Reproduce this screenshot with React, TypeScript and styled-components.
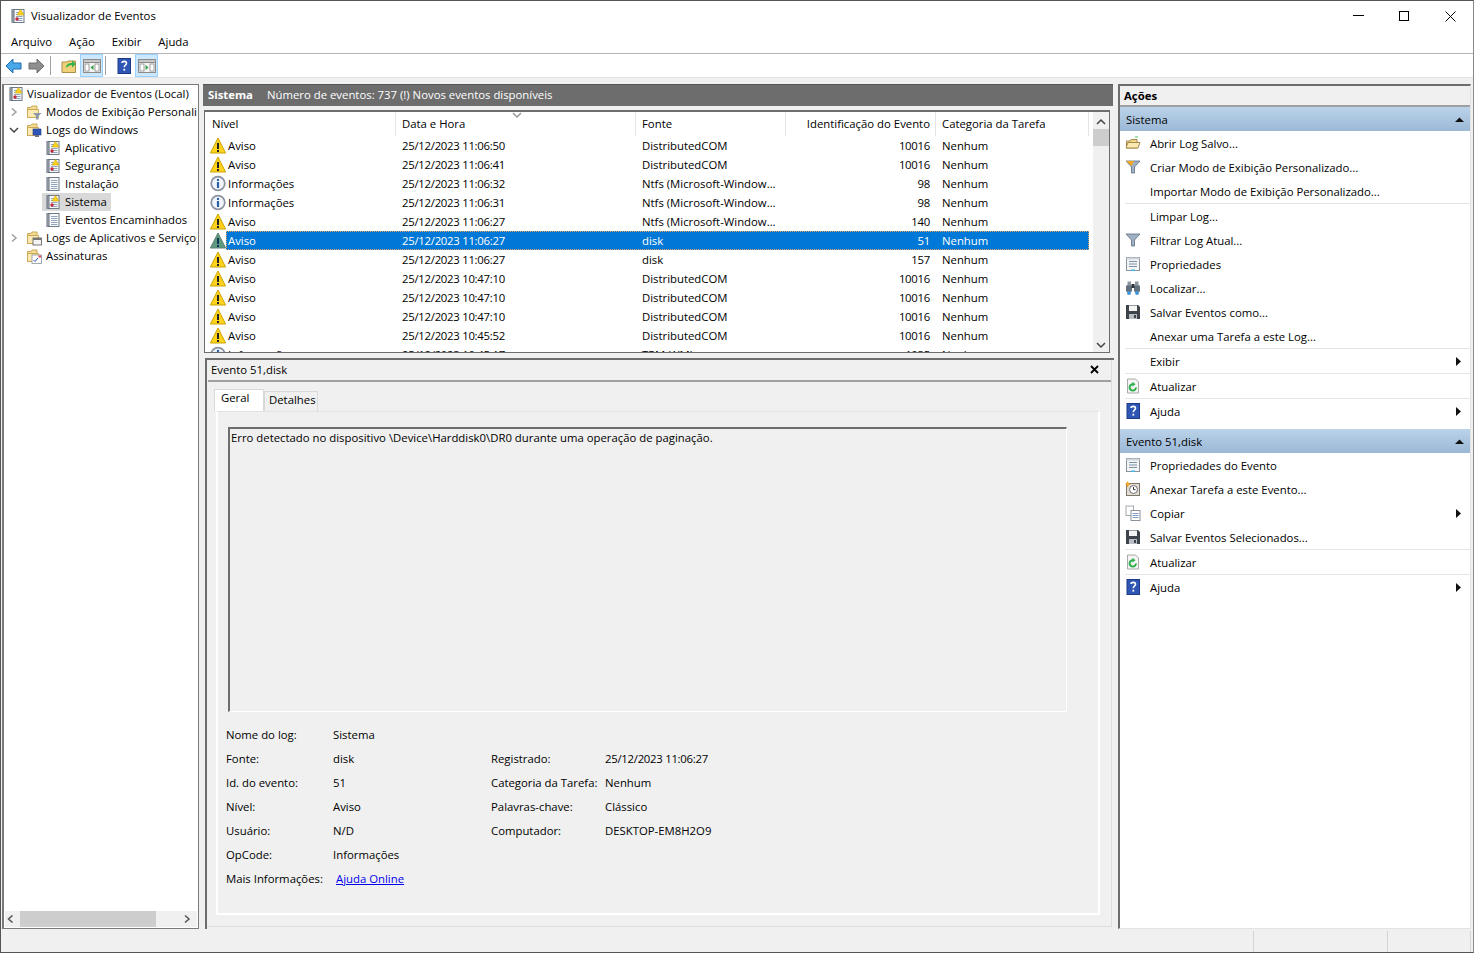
import React from "react";
import styled, { createGlobalStyle } from "styled-components";

const GlobalStyle = createGlobalStyle`
	html, body {
		margin: 0;
		padding: 0;
		height: 100%;
		overflow: hidden;
		background: #f0f0f0;
	}
	body {
		font-family: "Open Sans", "Noto Sans", "Liberation Sans", sans-serif;
		font-size: 11.35px;
		color: #000;
	}
	svg {
		display: block;
		flex: none;
	}
`;

/* window chrome */

const Window = styled.div`
	box-sizing: border-box;
	width: 1474px;
	height: 953px;
	display: flex;
	flex-direction: column;
	border: 1px solid #555;
	border-right-color: #8a8a8a;
	background: #f0f0f0;
	overflow: hidden;
`;

const TitleBar = styled.div`
	height: 30px;
	flex: none;
	display: flex;
	align-items: center;
	background: #fff;
	padding-left: 9px;
`;

const Title = styled.div`
	margin-left: 5px;
	padding-bottom: 2px;
	flex: 1;
`;

const WindowButton = styled.div`
	width: 46px;
	height: 30px;
	display: flex;
	align-items: center;
	justify-content: center;
`;

const MenuBar = styled.div`
	box-sizing: border-box;
	height: 23px;
	flex: none;
	display: flex;
	align-items: center;
	gap: 17px;
	padding: 0 0 2px 10px;
	background: #fff;
	border-bottom: 1px solid #b4b4bd;
`;

const Toolbar = styled.div`
	height: 23px;
	flex: none;
	display: flex;
	align-items: center;
	padding-left: 1px;
	background: #fff;
	border-bottom: 1px solid #e3e3e3;
`;

const ToolButton = styled.div<{ $active?: boolean }>`
	box-sizing: border-box;
	width: 23px;
	height: 23px;
	display: flex;
	align-items: center;
	justify-content: center;
	background: ${(p) => (p.$active ? "#cce8ff" : "transparent")};
	border: 1px solid ${(p) => (p.$active ? "#99d1ff" : "transparent")};
`;

const ToolSep = styled.div`
	width: 1px;
	height: 19px;
	margin: 0 6px 0 2px;
	background: #a0a0a0;
`;

const Main = styled.div`
	flex: 1;
	min-height: 0;
	display: flex;
	gap: 4px;
	padding: 6px 2px 0 1px;
`;

const StatusBar = styled.div`
	height: 23px;
	flex: none;
	display: flex;
	justify-content: flex-end;
	padding: 2px 2px 0 0;
	box-sizing: border-box;
`;

const StatusCell = styled.div<{ $w: number; $last?: boolean }>`
	width: ${(p) => p.$w}px;
	border-left: 1px solid #d4d4d4;
	border-right: ${(p) => (p.$last ? "1px solid #d4d4d4" : "none")};
	box-sizing: border-box;
`;

/* left tree */

const TreePane = styled.div`
	box-sizing: border-box;
	width: 197px;
	flex: none;
	display: flex;
	flex-direction: column;
	background: #fff;
	border: 1px solid #7a7a7a;
	border-left-width: 2px;
`;

const TreeBody = styled.div`
	flex: 1;
	overflow: hidden;
	margin-right: 1px;
`;

const TreeRow = styled.div<{ $level: number }>`
	height: 18px;
	display: flex;
	align-items: center;
	white-space: nowrap;
	padding-left: ${(p) => [4, 3, 38][p.$level]}px;
`;

const Twisty = styled.div`
	width: 14px;
	height: 18px;
	flex: none;
	margin-right: 5px;
	display: flex;
	align-items: center;
	justify-content: center;
`;

const TreeItem = styled.div<{ $selected?: boolean; $level: number }>`
	height: 18px;
	flex: none;
	display: flex;
	align-items: center;
	gap: ${(p) => (p.$level === 0 ? 3 : 4)}px;
	padding: ${(p) => (p.$level === 2 ? "0 4px 0 3px" : "0")};
	background: ${(p) => (p.$selected ? "#d9d9d9" : "transparent")};
`;

const TreeLabel = styled.span`
	padding-bottom: 2px;
`;

const HScroll = styled.div`
	height: 16px;
	flex: none;
	display: flex;
	align-items: center;
	justify-content: space-between;
	background: #f0f0f0;
	margin: 0 1px 1px 1px;
	padding: 0 5px 0 1px;
	box-sizing: border-box;
	position: relative;
`;

const HThumb = styled.div`
	position: absolute;
	left: 15px;
	top: 0;
	width: 136px;
	height: 16px;
	background: #cdcdcd;
`;

/* centre column */

const Centre = styled.div`
	flex: 1;
	min-width: 0;
	display: flex;
	flex-direction: column;
`;

const LogHeader = styled.div`
	height: 22px;
	flex: none;
	display: flex;
	align-items: center;
	gap: 14px;
	margin-right: 1px;
	padding: 0 0 2px 5px;
	background: #6d6d6d;
	border-top: 1px solid #555;
	box-sizing: border-box;
	color: #fff;
`;

const LogName = styled.b`
	font-weight: 700;
`;

const ListFrame = styled.div`
	height: 243px;
	flex: none;
	margin: 4px 4px 5px 1px;
	box-sizing: border-box;
	display: flex;
	background: #fff;
	border: 1px solid #6d6d6d;
	border-width: 2px 1px 1px 1px;
`;

const ListArea = styled.div`
	flex: 1;
	min-width: 0;
	overflow: hidden;
	padding-right: 4px;
`;

const ListHead = styled.div`
	height: 24px;
	display: grid;
	grid-template-columns: 191px 240px 150px 150px 1fr;
`;

const HeadCell = styled.div<{ $right?: boolean }>`
	position: relative;
	display: flex;
	align-items: center;
	justify-content: ${(p) => (p.$right ? "flex-end" : "flex-start")};
	padding: 0 5px 2px 6px;
	border-right: 1px solid #e5e5e5;
	&:first-child {
		padding-left: 7px;
	}
`;

const SortMark = styled.div`
	position: absolute;
	left: 116px;
	top: -1px;
`;

const ListRow = styled.div`
	height: 19px;
	display: flex;
	align-items: center;
	padding-left: 4px;
`;

const RowCells = styled.div<{ $selected?: boolean }>`
	flex: 1;
	box-sizing: border-box;
	height: 19px;
	display: grid;
	grid-template-columns: 170px 240px 150px 150px 1fr;
	align-items: center;
	background: ${(p) => (p.$selected ? "#0078d7" : "transparent")};
	color: ${(p) => (p.$selected ? "#fff" : "#000")};
	outline: ${(p) => (p.$selected ? "1px dotted #e8a35c" : "none")};
	outline-offset: -1px;
`;

const Cell = styled.div<{ $right?: boolean; $digits?: boolean }>`
	padding: 0 6px 1px;
	white-space: nowrap;
	overflow: hidden;
	text-align: ${(p) => (p.$right ? "right" : "left")};
	letter-spacing: ${(p) => (p.$digits ? "-0.27px" : "normal")};
`;

const LevelCell = styled(Cell)`
	padding: 0 2px 1px;
`;

const VScroll = styled.div`
	width: 16px;
	flex: none;
	background: #f0f0f0;
	display: flex;
	flex-direction: column;
	align-items: center;
	justify-content: space-between;
	position: relative;
	padding: 6px 0 3px;
	box-sizing: border-box;
`;

const VThumb = styled.div`
	position: absolute;
	top: 17px;
	left: 0;
	width: 16px;
	height: 17px;
	background: #cdcdcd;
`;

const DetailFrame = styled.div`
	flex: 1;
	min-height: 0;
	margin-left: 2px;
	display: flex;
	flex-direction: column;
	border-top: 2px solid #6d6d6d;
	border-left: 2px solid #6d6d6d;
	padding-right: 2px;
`;

const DetailInner = styled.div`
	flex: 1;
	min-height: 0;
	display: flex;
	flex-direction: column;
	border-right: 1px solid #dedede;
	border-bottom: 1px solid #dedede;
	margin-bottom: 2px;
`;

const DetailHead = styled.div`
	height: 18px;
	flex: none;
	display: flex;
	align-items: center;
	justify-content: space-between;
	margin-left: 1px;
	padding: 0 12px 2px 3px;
	border-bottom: 2px solid #a0a0a0;
`;

const Tabs = styled.div`
	display: flex;
	align-items: flex-end;
	height: 22px;
	flex: none;
	margin: 7px 0 0 7px;
`;

const Tab = styled.div<{ $active?: boolean }>`
	box-sizing: border-box;
	width: ${(p) => (p.$active ? 50 : 54)}px;
	height: ${(p) => (p.$active ? 22 : 20)}px;
	padding: ${(p) => (p.$active ? "0 0 6px 6px" : "0 0 4px 4px")};
	display: flex;
	align-items: center;
	background: ${(p) => (p.$active ? "#fff" : "#f0f0f0")};
	border: 1px solid #d9d9d9;
	border-bottom: none;
`;

const TabPanel = styled.div`
	flex: none;
	height: 504px;
	width: 884px;
	margin-left: 9px;
	box-sizing: border-box;
	padding: 15px 0 0 8px;
	border: 2px solid #fff;
	border-top: 1px solid #e3e3e3;
`;

const MessageBox = styled.div`
	box-sizing: border-box;
	width: 839px;
	height: 285px;
	margin-left: 2px;
	padding: 1px;
	border: 1px solid #fff;
	border-top: 2px solid #6d6d6d;
	border-left: 2px solid #6d6d6d;
`;

const Fields = styled.div`
	display: flex;
	margin-top: 10px;
`;

const FieldColumn = styled.div<{ $w: number; $labelW: number; $offset?: boolean }>`
	width: ${(p) => p.$w}px;
	display: grid;
	grid-template-columns: ${(p) => p.$labelW}px 1fr;
	grid-auto-rows: 24px;
	align-items: center;
	padding-top: ${(p) => (p.$offset ? 24 : 0)}px;
`;

const DateValue = styled.span`
	letter-spacing: -0.27px;
`;

const Link = styled.a`
	margin-left: 3px;
	color: #0000ee;
	text-decoration: underline;
`;

/* right column */

const ActionsPane = styled.div`
	box-sizing: border-box;
	flex: none;
	width: 353px;
	display: flex;
	flex-direction: column;
	background: #fff;
	border-top: 2px solid #6d6d6d;
	border-left: 2px solid #6d6d6d;
	border-right: 1px solid #e3e3e3;
	border-bottom: 1px solid #e3e3e3;
`;

const ActionsHead = styled.div`
	height: 18px;
	flex: none;
	display: flex;
	align-items: center;
	padding: 0 0 1px 4px;
	background: #f0f0f0;
	border-bottom: 2px solid #a0a0a0;
	font-weight: 700;
`;

const Band = styled.div<{ $gap?: boolean }>`
	box-sizing: border-box;
	height: 24px;
	flex: none;
	display: flex;
	align-items: center;
	justify-content: space-between;
	padding: 0 6px;
	margin-top: ${(p) => (p.$gap ? 6 : 0)}px;
	background: linear-gradient(#bbd3ea, #9bb8d6);
`;

const ActionRow = styled.div<{ $sep?: boolean }>`
	height: 24px;
	flex: none;
	display: flex;
	align-items: center;
	margin-left: 5px;
	padding: 0 7px 0 0;
	border-bottom: ${(p) => (p.$sep ? "1px solid #e5e5e5" : "none")};
`;

const ActionIcon = styled.div`
	width: 16px;
	height: 16px;
	margin-right: 9px;
	flex: none;
`;

const ActionLabel = styled.div`
	flex: 1;
`;

/* icons */

const Warn = ({ dim }: { dim?: boolean }) => (
	<svg width="17" height="17" viewBox="0 0 17 17">
		<path d="M9 1 L16.6 16 L1.4 16 Z" fill={dim ? "#5f9a7e" : "#ffd21e"} stroke={dim ? "#5a7f70" : "#c9a400"} strokeLinejoin="round" />
		<rect x="8" y="6" width="2" height="6" fill={dim ? "#0c3358" : "#222"} />
		<rect x="8" y="13" width="2" height="2" fill={dim ? "#0c3358" : "#222"} />
	</svg>
);

const Info = () => (
	<svg width="17" height="17" viewBox="0 0 17 17">
		<circle cx="9" cy="8.5" r="6.8" fill="#f1f5fb" stroke="#8b93a3" strokeWidth="1.8" />
		<circle cx="9" cy="4.9" r="1.2" fill="#2a5fa8" />
		<rect x="7.9" y="7" width="2.2" height="6" fill="#2a5fa8" />
	</svg>
);

const Folder = ({ children }: { children?: React.ReactNode }) => (
	<svg width="16" height="16" viewBox="0 0 16 16">
		<path d="M1.5 3.5 H5 L6 2 H11 V13.5 H1.5 Z" fill="#f6dc92" stroke="#c9a957" />
		<path d="M1.5 13.5 V5.5 H12.5 V13.5 Z" fill="#fbeab4" stroke="#c9a957" />
		{children}
	</svg>
);

const LogBook = ({ plain }: { plain?: boolean }) => (
	<svg width="16" height="16" viewBox="0 0 16 16">
		<rect x="3" y="1.5" width="11" height="13" fill="#f7f9fb" stroke="#6f7a87" />
		{[2, 4, 6, 8, 10, 12, 14].map((y) => (
			<rect key={y} x="1" y={y - 0.5} width="4" height="1" fill="#5f6a78" />
		))}
		{[4, 6, 8, 10, 12].map((y) => (
			<rect key={y} x="6" y={y} width="6.5" height="1" fill="#93a5ba" />
		))}
		{!plain && <path d="M10.5 1.5 L14 7 H7 Z" fill="#ffd21e" stroke="#c9a400" strokeWidth="0.6" />}
		{!plain && <circle cx="7" cy="11" r="1.7" fill="#c4293c" />}
	</svg>
);

const Help = ({ size = 16 }: { size?: number }) => (
	<svg width={size} height={size} viewBox="0 0 16 16">
		<rect x="2" y="0.5" width="12.5" height="15" fill="#2f56b4" stroke="#1c3a86" />
		<path d="M6 5 C6 2.8 10.5 2.8 10.5 5.2 C10.5 7 8.3 7 8.3 9.2" fill="none" stroke="#fff" strokeWidth="1.6" />
		<rect x="7.4" y="10.8" width="1.8" height="1.8" fill="#fff" />
	</svg>
);

const PanelToggle = ({ right }: { right?: boolean }) => (
	<svg width="20" height="16" viewBox="0 0 20 16">
		<rect x="1.5" y="1.5" width="17" height="13" fill="#f4f4f4" stroke="#8b8b8b" />
		<rect x="1.5" y="1.5" width="17" height="3" fill="#c9c9c9" stroke="#8b8b8b" />
		<rect x="3" y="6" width="4" height="7" fill="#fff" stroke="#8a8a8a" strokeWidth="0.8" />
		<rect x="13" y="6" width="4" height="7" fill="#fff" stroke="#8a8a8a" strokeWidth="0.8" />
		<path d={right ? "M8.5 7 L11.5 9.5 L8.5 12 Z" : "M11.5 7 L8.5 9.5 L11.5 12 Z"} fill="#2f9e44" />
	</svg>
);

const NavArrow = ({ forward }: { forward?: boolean }) => (
	<svg width="17" height="16" viewBox="0 0 17 16">
		<path
			d={forward ? "M16 8 L9 1 V5 H1 V11 H9 V15 Z" : "M1 8 L8 1 V5 H16 V11 H8 V15 Z"}
			fill={forward ? "#8f8f8f" : "#49a8ea"}
			stroke={forward ? "#6e6e6e" : "#1f6fb5"}
			strokeLinejoin="round"
		/>
	</svg>
);

const Chevron = ({ dir, color = "#444" }: { dir: "up" | "down" | "left" | "right"; color?: string }) => {
	const d = {
		up: "M1 6 L5 2 L9 6",
		down: "M1 2 L5 6 L9 2",
		left: "M6.5 0.5 L2.5 4 L6.5 7.5",
		right: "M3 0.5 L7 4 L3 7.5",
	}[dir];
	return (
		<svg width="10" height="8" viewBox="0 0 10 8">
			<path d={d} fill="none" stroke={color} strokeWidth="1.5" />
		</svg>
	);
};

const SmallTriangle = ({ up }: { up?: boolean }) => (
	<svg width="9" height="9" viewBox="0 0 9 9">
		<path d={up ? "M0 7 L4.5 2.5 L9 7 Z" : "M2 0 L7 4.5 L2 9 Z"} fill="#111" />
	</svg>
);

const OpenFolder = () => (
	<svg width="16" height="16" viewBox="0 0 16 16">
		<path d="M1.5 6 H5 L6 4.5 H12 V13 H1.5 Z" fill="#f0d48a" stroke="#a48a4f" />
		<path d="M1 13 L3 7.5 H15 L13 13 Z" fill="#fbe9b2" stroke="#a48a4f" />
		<rect x="10" y="1.5" width="3" height="1" fill="#3ecf5a" />
	</svg>
);

const Funnel = ({ accent }: { accent?: boolean }) => (
	<svg width="16" height="16" viewBox="0 0 16 16">
		<path d="M1 2 H15 L9.5 8 V14 H6.5 V8 Z" fill="#9fb1c3" stroke="#5c6d80" strokeWidth="0.8" />
		{accent && <path d="M1 2 H9 L6.5 7 Z" fill="#f5a623" />}
	</svg>
);

const PropsIcon = () => (
	<svg width="16" height="16" viewBox="0 0 16 16">
		<rect x="1.5" y="1.5" width="13" height="13" fill="#f3f5f7" stroke="#8a929b" />
		<rect x="1.5" y="1.5" width="13" height="2" fill="#cfd6dd" />
		{[5, 7.5, 10].map((y) => (
			<rect key={y} x="4" y={y} width="8" height="1" fill="#7d92a8" />
		))}
		<rect x="6" y="13.5" width="4" height="1.5" fill="#45b3e0" />
	</svg>
);

const Binoculars = () => (
	<svg width="16" height="16" viewBox="0 0 16 16">
		<rect x="1" y="5" width="6" height="7" rx="1.5" fill="#66707c" />
		<rect x="9" y="5" width="6" height="7" rx="1.5" fill="#66707c" />
		<rect x="2.5" y="1.5" width="3.5" height="4" fill="#8b95a0" />
		<rect x="10" y="1.5" width="3.5" height="4" fill="#8b95a0" />
		<rect x="6.5" y="4" width="3" height="4" fill="#2d343c" />
		<circle cx="4" cy="13" r="2" fill="#3f96dc" />
		<circle cx="12" cy="13" r="2" fill="#3f96dc" />
	</svg>
);

const Disk = () => (
	<svg width="16" height="16" viewBox="0 0 16 16">
		<path d="M1 1 H13 L15 3 V15 H1 Z" fill="#3d434a" />
		<rect x="4" y="1.5" width="8" height="5.5" fill="#f4f4f4" />
		<rect x="4" y="10" width="8" height="5" fill="#b9bec4" />
		<rect x="9" y="11" width="2" height="3" fill="#3d434a" />
	</svg>
);

const Refresh = () => (
	<svg width="16" height="16" viewBox="0 0 16 16">
		<path d="M2.5 1 H10.5 L13.5 4 V15 H2.5 Z" fill="#f5f5f5" stroke="#a9a9a9" />
		<path d="M11 9.5 A3.2 3.2 0 1 1 8 6.2" fill="none" stroke="#2fae4a" strokeWidth="2" />
		<path d="M7.5 3.8 L10.5 6.2 L7.5 8.4 Z" fill="#2fae4a" />
	</svg>
);

const TaskIcon = () => (
	<svg width="16" height="16" viewBox="0 0 16 16">
		<rect x="1.5" y="2.5" width="13" height="12" fill="#e4dfd6" stroke="#7d756a" />
		<circle cx="8.5" cy="8.5" r="4" fill="#fff" stroke="#6b6b6b" />
		<path d="M8.5 6 V8.7 H10.5" fill="none" stroke="#333" />
		<path d="M2.5 0 L4 2.5 L6.5 3 L4 4 L2.5 6.5 L1.5 4 L0 3 L1.5 2.5 Z" fill="#f5a623" />
	</svg>
);

const CopyIcon = () => (
	<svg width="16" height="16" viewBox="0 0 16 16">
		<rect x="1" y="1" width="7.5" height="9.5" fill="#fff" stroke="#a3a9b0" />
		<rect x="6" y="5.5" width="9" height="10" fill="#fff" stroke="#8a929b" />
		{[8, 10, 12].map((y) => (
			<rect key={y} x="7.5" y={y} width="6" height="1" fill="#7d9cc0" />
		))}
	</svg>
);

const treeRows: { label: string; level: number; twisty?: "right" | "down"; icon: React.ReactNode; selected?: boolean }[] = [
	{ label: "Visualizador de Eventos (Local)", level: 0, icon: <LogBook /> },
	{
		label: "Modos de Exibição Personalizados",
		level: 1,
		twisty: "right",
		icon: (
			<Folder>
				<path d="M7 9 H15.5 L12.5 12 V15.5 H10 V12 Z" fill="#8a98a8" />
			</Folder>
		),
	},
	{
		label: "Logs do Windows",
		level: 1,
		twisty: "down",
		icon: (
			<Folder>
				<rect x="7" y="7" width="8" height="6" fill="#2f56b4" stroke="#1c3a86" strokeWidth="0.6" />
				<rect x="9" y="13" width="4" height="2" fill="#6b7480" />
			</Folder>
		),
	},
	{ label: "Aplicativo", level: 2, icon: <LogBook /> },
	{ label: "Segurança", level: 2, icon: <LogBook /> },
	{ label: "Instalação", level: 2, icon: <LogBook plain /> },
	{ label: "Sistema", level: 2, icon: <LogBook />, selected: true },
	{ label: "Eventos Encaminhados", level: 2, icon: <LogBook plain /> },
	{
		label: "Logs de Aplicativos e Serviços",
		level: 1,
		twisty: "right",
		icon: (
			<Folder>
				<rect x="7" y="8" width="8.5" height="7" fill="#f4f4f4" stroke="#555" strokeWidth="0.8" />
				<rect x="7" y="8" width="8.5" height="2" fill="#777" />
			</Folder>
		),
	},
	{
		label: "Assinaturas",
		level: 1,
		icon: (
			<Folder>
				<rect x="6" y="7" width="9.5" height="8.5" fill="#fff" stroke="#8a929b" strokeWidth="0.8" />
				<path d="M7.5 12 L9 13.5 L12 10" fill="none" stroke="#2f56b4" />
				<rect x="12.5" y="7.5" width="2.5" height="2" fill="#d9455a" />
			</Folder>
		),
	},
];

type Event = { kind: "w" | "i"; date: string; source: string; id: string; sel?: boolean };

const events: Event[] = [
	{ kind: "w", date: "25/12/2023 11:06:50", source: "DistributedCOM", id: "10016" },
	{ kind: "w", date: "25/12/2023 11:06:41", source: "DistributedCOM", id: "10016" },
	{ kind: "i", date: "25/12/2023 11:06:32", source: "Ntfs (Microsoft-Window...", id: "98" },
	{ kind: "i", date: "25/12/2023 11:06:31", source: "Ntfs (Microsoft-Window...", id: "98" },
	{ kind: "w", date: "25/12/2023 11:06:27", source: "Ntfs (Microsoft-Window...", id: "140" },
	{ kind: "w", date: "25/12/2023 11:06:27", source: "disk", id: "51", sel: true },
	{ kind: "w", date: "25/12/2023 11:06:27", source: "disk", id: "157" },
	{ kind: "w", date: "25/12/2023 10:47:10", source: "DistributedCOM", id: "10016" },
	{ kind: "w", date: "25/12/2023 10:47:10", source: "DistributedCOM", id: "10016" },
	{ kind: "w", date: "25/12/2023 10:47:10", source: "DistributedCOM", id: "10016" },
	{ kind: "w", date: "25/12/2023 10:45:52", source: "DistributedCOM", id: "10016" },
	{ kind: "i", date: "25/12/2023 10:45:17", source: "TPM-WMI", id: "1035" },
];

type Action = { label: string; icon?: React.ReactNode; sep?: boolean; more?: boolean };

const systemActions: Action[] = [
	{ label: "Abrir Log Salvo...", icon: <OpenFolder /> },
	{ label: "Criar Modo de Exibição Personalizado...", icon: <Funnel accent /> },
	{ label: "Importar Modo de Exibição Personalizado...", sep: true },
	{ label: "Limpar Log..." },
	{ label: "Filtrar Log Atual...", icon: <Funnel /> },
	{ label: "Propriedades", icon: <PropsIcon /> },
	{ label: "Localizar...", icon: <Binoculars /> },
	{ label: "Salvar Eventos como...", icon: <Disk /> },
	{ label: "Anexar uma Tarefa a este Log...", sep: true },
	{ label: "Exibir", more: true, sep: true },
	{ label: "Atualizar", icon: <Refresh />, sep: true },
	{ label: "Ajuda", icon: <Help />, more: true },
];

const eventActions: Action[] = [
	{ label: "Propriedades do Evento", icon: <PropsIcon /> },
	{ label: "Anexar Tarefa a este Evento...", icon: <TaskIcon /> },
	{ label: "Copiar", icon: <CopyIcon />, more: true },
	{ label: "Salvar Eventos Selecionados...", icon: <Disk />, sep: true },
	{ label: "Atualizar", icon: <Refresh />, sep: true },
	{ label: "Ajuda", icon: <Help />, more: true },
];

const ActionList = ({ items }: { items: Action[] }) => (
	<>
		{items.map((a) => (
			<ActionRow key={a.label} $sep={a.sep}>
				<ActionIcon>{a.icon}</ActionIcon>
				<ActionLabel>{a.label}</ActionLabel>
				{a.more && <SmallTriangle />}
			</ActionRow>
		))}
	</>
);

const leftFields = [
	["Nome do log:", "Sistema"],
	["Fonte:", "disk"],
	["Id. do evento:", "51"],
	["Nível:", "Aviso"],
	["Usuário:", "N/D"],
	["OpCode:", "Informações"],
];

const rightFields = [
	["Categoria da Tarefa:", "Nenhum"],
	["Palavras-chave:", "Clássico"],
	["Computador:", "DESKTOP-EM8H2O9"],
];

const App = () => (
	<Window>
		<GlobalStyle />
		<TitleBar>
			<LogBook />
			<Title>Visualizador de Eventos</Title>
			<WindowButton>
				<svg width="11" height="2" viewBox="0 0 11 2">
					<rect width="11" height="1" fill="#000" />
				</svg>
			</WindowButton>
			<WindowButton>
				<svg width="10" height="10" viewBox="0 0 10 10">
					<rect x="0.5" y="0.5" width="9" height="9" fill="none" stroke="#000" />
				</svg>
			</WindowButton>
			<WindowButton>
				<svg width="11" height="11" viewBox="0 0 11 11">
					<path d="M0.5 0.5 L10.5 10.5 M10.5 0.5 L0.5 10.5" stroke="#000" />
				</svg>
			</WindowButton>
		</TitleBar>
		<MenuBar>
			<span>Arquivo</span>
			<span>Ação</span>
			<span>Exibir</span>
			<span>Ajuda</span>
		</MenuBar>
		<Toolbar>
			<ToolButton>
				<NavArrow />
			</ToolButton>
			<ToolButton>
				<NavArrow forward />
			</ToolButton>
			<ToolSep />
			<ToolButton>
				<svg width="16" height="16" viewBox="0 0 16 16">
					<path d="M1 4 H6 L7 3 H14.5 V14.5 H1 Z" fill="#f0d17a" stroke="#a98f4c" />
					<path d="M5 10 C5 6 8 5 11 5 V2.5 L15 6 L11 9.5 V7 C9 7 7 8 5 10 Z" fill="#35b14f" />
				</svg>
			</ToolButton>
			<ToolButton $active>
				<PanelToggle />
			</ToolButton>
			<ToolSep />
			<ToolButton>
				<Help />
			</ToolButton>
			<ToolButton $active>
				<PanelToggle right />
			</ToolButton>
		</Toolbar>
		<Main>
			<TreePane>
				<TreeBody>
					{treeRows.map((r) => (
						<TreeRow key={r.label} $level={r.level}>
							{r.level === 1 && <Twisty>{r.twisty && <Chevron dir={r.twisty} color={r.twisty === "down" ? "#444" : "#a0a0a0"} />}</Twisty>}
							<TreeItem $level={r.level} $selected={r.selected}>
								{r.icon}
								<TreeLabel>{r.label}</TreeLabel>
							</TreeItem>
						</TreeRow>
					))}
				</TreeBody>
				<HScroll>
					<Chevron dir="left" color="#555" />
					<HThumb />
					<Chevron dir="right" color="#555" />
				</HScroll>
			</TreePane>
			<Centre>
				<LogHeader>
					<LogName>Sistema</LogName>
					<span>Número de eventos: 737 (!) Novos eventos disponíveis</span>
				</LogHeader>
				<ListFrame>
					<ListArea>
						<ListHead>
							<HeadCell>Nível</HeadCell>
							<HeadCell>
								Data e Hora
								<SortMark>
									<Chevron dir="down" color="#999" />
								</SortMark>
							</HeadCell>
							<HeadCell>Fonte</HeadCell>
							<HeadCell $right>Identificação do Evento</HeadCell>
							<HeadCell>Categoria da Tarefa</HeadCell>
						</ListHead>
						{events.map((e, i) => (
							<ListRow key={i}>
								{e.kind === "w" ? <Warn dim={e.sel} /> : <Info />}
								<RowCells $selected={e.sel}>
									<LevelCell>{e.kind === "w" ? "Aviso" : "Informações"}</LevelCell>
									<Cell $digits>{e.date}</Cell>
									<Cell>{e.source}</Cell>
									<Cell $right $digits>{e.id}</Cell>
									<Cell>Nenhum</Cell>
								</RowCells>
							</ListRow>
						))}
					</ListArea>
					<VScroll>
						<Chevron dir="up" />
						<VThumb />
						<Chevron dir="down" />
					</VScroll>
				</ListFrame>
				<DetailFrame>
					<DetailInner>
						<DetailHead>
							<span>Evento 51,disk</span>
							<svg width="9" height="9" viewBox="0 0 9 9">
								<path d="M1 1 L8 8 M8 1 L1 8" stroke="#000" strokeWidth="1.8" />
							</svg>
						</DetailHead>
						<Tabs>
							<Tab $active>Geral</Tab>
							<Tab>Detalhes</Tab>
						</Tabs>
						<TabPanel>
							<MessageBox>Erro detectado no dispositivo \Device\Harddisk0\DR0 durante uma operação de paginação.</MessageBox>
							<Fields>
								<FieldColumn $w={265} $labelW={107}>
									{leftFields.map(([k, v]) => (
										<React.Fragment key={k}>
											<span>{k}</span>
											<span>{v}</span>
										</React.Fragment>
									))}
									<span>Mais Informações:</span>
									<span>
										<Link href="#">Ajuda Online</Link>
									</span>
								</FieldColumn>
								<FieldColumn $w={400} $labelW={114} $offset>
									<span>Registrado:</span>
									<DateValue>25/12/2023 11:06:27</DateValue>
									{rightFields.map(([k, v]) => (
										<React.Fragment key={k}>
											<span>{k}</span>
											<span>{v}</span>
										</React.Fragment>
									))}
								</FieldColumn>
							</Fields>
						</TabPanel>
					</DetailInner>
				</DetailFrame>
			</Centre>
			<ActionsPane>
				<ActionsHead>Ações</ActionsHead>
				<Band>
					Sistema
					<SmallTriangle up />
				</Band>
				<ActionList items={systemActions} />
				<Band $gap>
					Evento 51,disk
					<SmallTriangle up />
				</Band>
				<ActionList items={eventActions} />
			</ActionsPane>
		</Main>
		<StatusBar>
			<StatusCell $w={134} />
			<StatusCell $w={84} $last />
		</StatusBar>
	</Window>
);

export default App;
